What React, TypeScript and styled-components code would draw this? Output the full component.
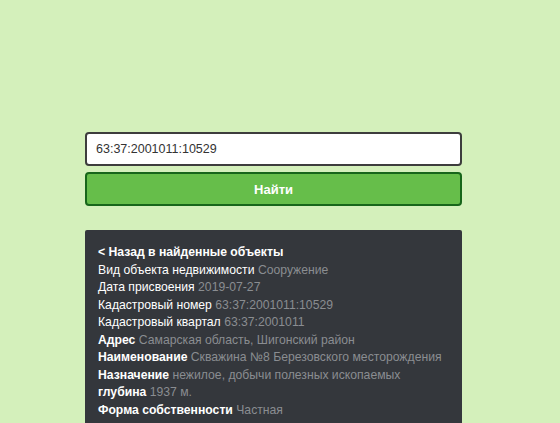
import React from "react";
import styled, { createGlobalStyle } from "styled-components";

const Global = createGlobalStyle`
  html, body { margin: 0; padding: 0; background: #d4f0bb; }
  body { font-family: "Liberation Sans", Arial, sans-serif; }
`;

const Page = styled.div`
  width: 560px;
  height: 423px;
  overflow: hidden;
  background: #d4f0bb;
  padding-top: 132px;
  box-sizing: border-box;
`;

const Column = styled.div`
  width: 377px;
  margin-left: 85px;
  display: flex;
  flex-direction: column;
`;

const SearchInput = styled.input`
  box-sizing: border-box;
  height: 34px;
  width: 100%;
  border: 2px solid #3d3d3d;
  border-radius: 4px;
  background: #fff;
  padding: 0 9px;
  font-family: "Liberation Sans", Arial, sans-serif;
  font-size: 12.5px;
  color: #333;
  outline: none;
`;

const FindButton = styled.button`
  box-sizing: border-box;
  margin-top: 6px;
  height: 34px;
  width: 100%;
  border: 2px solid #17661a;
  border-radius: 4px;
  background: #66be4a;
  color: #fff;
  font-family: "Liberation Sans", Arial, sans-serif;
  font-size: 13px;
  font-weight: bold;
`;

const Panel = styled.div`
  margin-top: 24px;
  background: #34373c;
  border-radius: 2px;
  padding: 14px 13px 20px;
  font-size: 12.2px;
  line-height: 17.5px;
  color: #fff;
`;

const Back = styled.div`
  font-weight: bold;
`;

const Row = styled.div`
  white-space: nowrap;
`;

const Label = styled.span<{ $bold?: boolean }>`
  color: #fff;
  font-weight: ${(p) => (p.$bold ? "bold" : "normal")};
`;

const Value = styled.span`
  color: #8a8d91;
`;

const rows: { label: string; value: string; bold?: boolean }[] = [
  { label: "Вид объекта недвижимости", value: "Сооружение" },
  { label: "Дата присвоения", value: "2019-07-27" },
  { label: "Кадастровый номер", value: "63:37:2001011:10529" },
  { label: "Кадастровый квартал", value: "63:37:2001011" },
  { label: "Адрес", value: "Самарская область, Шигонский район", bold: true },
  { label: "Наименование", value: "Скважина №8 Березовского месторождения", bold: true },
  { label: "Назначение", value: "нежилое, добычи полезных ископаемых", bold: true },
  { label: "глубина", value: "1937 м.", bold: true },
  { label: "Форма собственности", value: "Частная", bold: true },
];

export default function App() {
  return (
    <Page>
      <Global />
      <Column>
        <SearchInput defaultValue="63:37:2001011:10529" />
        <FindButton>Найти</FindButton>
        <Panel>
          <Back>&lt; Назад в найденные объекты</Back>
          {rows.map((r) => (
            <Row key={r.label}>
              <Label $bold={r.bold}>{r.label}</Label> <Value>{r.value}</Value>
            </Row>
          ))}
        </Panel>
      </Column>
    </Page>
  );
}
